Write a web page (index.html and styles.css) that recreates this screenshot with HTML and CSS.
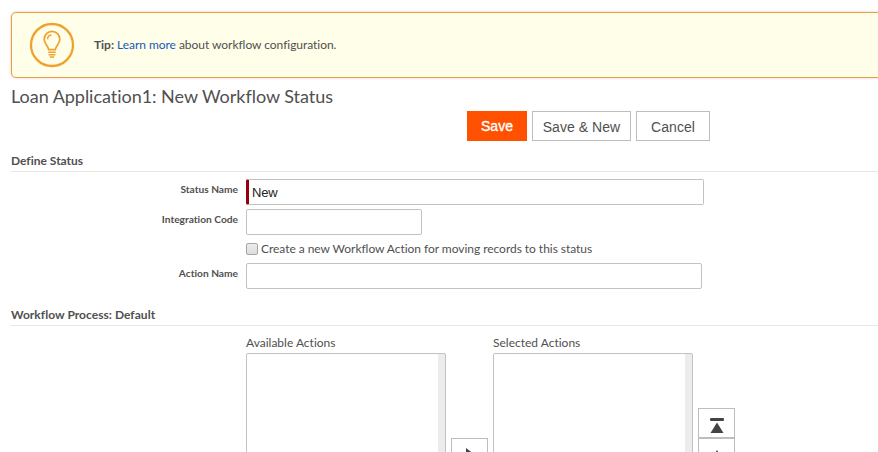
FILE: index.html
```
<!DOCTYPE html>
<html lang="en">
<head>
<meta charset="utf-8">
<title>New Workflow Status</title>
<link rel="stylesheet" href="styles.css">
</head>
<body>
<main class="page">
  <aside class="tip">
    <svg class="bulb" width="46" height="46" viewBox="0 0 46 46" fill="none" stroke="#f0a12b">
      <circle cx="23" cy="23" r="21" stroke-width="2.3"/>
      <path d="M19.7 27.6C19.2 24 15.2 21.6 15.2 17.2a7.8 7.8 0 0 1 15.6 0c0 4.4-4 6.8-4.5 10.4z" stroke-width="1.7"/>
      <path d="M18.6 17.2c0-2.6 1.5-4.2 4-4.3" stroke-width="1.5"/>
      <path d="M19.2 30.2h7.6M19.6 32.7h6.8M20.8 35.1h4.4" stroke-width="1.5"/>
    </svg>
    <p class="tip-text"><b>Tip:</b> <a class="link">Learn more</a> about workflow configuration.</p>
  </aside>
  <h1 class="title"><span>Loan Application1: New Workflow Status</span></h1>
  <div class="actions">
    <button class="btn btn-primary">Save</button>
    <button class="btn btn-new">Save &amp; New</button>
    <button class="btn btn-cancel">Cancel</button>
  </div>
  <h2 class="section"><span class="define">Define Status</span></h2>
  <form class="fields">
    <label class="label" for="status">Status Name</label>
    <input class="input required" id="status" value="New">
    <label class="label" for="code">Integration Code</label>
    <input class="input short" id="code">
    <label class="check"><span class="box"></span><span class="check-text">Create a new Workflow Action for moving records to this status</span></label>
    <label class="label" for="action">Action Name</label>
    <input class="input long" id="action">
  </form>
  <h2 class="section process"><span>Workflow Process: Default</span></h2>
  <div class="picker">
    <div class="list-group">
      <div class="list-label">Available Actions</div>
      <div class="list"></div>
    </div>
    <div class="move">
      <button class="icon-btn" aria-label="Add"><svg width="10" height="14" viewBox="0 0 10 14"><path d="M1 0l9 7-9 7z" fill="#444"/></svg></button>
    </div>
    <div class="list-group">
      <div class="list-label">Selected Actions</div>
      <div class="list"></div>
    </div>
    <div class="order">
      <button class="icon-btn top" aria-label="Move to top"><svg width="14" height="15" viewBox="0 0 14 15"><rect width="14" height="3" rx="1" fill="#444"/><path d="M7 4.5L13.5 15H.5z" fill="#444"/></svg></button>
      <button class="icon-btn up" aria-label="Move up"><svg width="14" height="11" viewBox="0 0 14 11"><path d="M7 0l6.5 11H.5z" fill="#444"/></svg></button>
    </div>
  </div>
</main>
</body>
</html>
```
FILE: styles.css
```
* { box-sizing: border-box; }
html, body { margin: 0; height: 452px; overflow: hidden; background: #fff; }
.page {
  height: 452px;
  overflow: hidden;
  padding: 12px 0 0 11px;
  font: 12px/16px Lato, sans-serif;
  font-variant-ligatures: none;
  color: #505050;
}
.tip {
  height: 66px;
  margin-right: -8px;
  padding-left: 17px;
  display: flex;
  align-items: center;
  border: 1px solid #e3a04e;
  border-radius: 5px;
  background: #fefee9;
  box-shadow: 0 0 3px #f1c9b0;
}
.bulb { margin-right: 19px; flex: none; }
.tip-text { margin: 0; white-space: nowrap; letter-spacing: -.04px; }
.link { color: #2058b8; }
.title {
  margin: 6px 0 0;
  font-size: 18px;
  line-height: 24px;
  font-weight: 400;
  letter-spacing: -.03px;
}
.actions { display: flex; gap: 5px; margin: 3px 0 0 456px; }
.btn {
  height: 30px;
  padding: 1px 0 0;
  border: 1px solid #bdbdbd;
  background: #fff;
  font: 14px "Liberation Sans", sans-serif;
  letter-spacing: .05px;
  color: #505050;
}
.btn-primary { width: 60px; padding: 0; border-color: #ff5100; background: #ff5100; color: #fff; -webkit-text-stroke: .35px #fff; }
.btn-new { width: 99px; }
.btn-cancel { width: 74px; }
.section {
  height: 20px;
  margin: 11px 0 0;
  border-bottom: 1px solid #e6e6e6;
  font-size: 12px;
  line-height: 17px;
  font-weight: 700;
}
.fields {
  display: grid;
  grid-template-columns: 227px 458px;
  grid-template-rows: 26px 26px 20px 26px;
  row-gap: 4px;
  column-gap: 8px;
  margin-top: 7px;
}
.label { text-align: right; font-size: 10.2px; line-height: 20px; font-weight: 700; }
.input {
  width: 100%;
  height: 26px;
  padding: 0 5px;
  border: 1px solid #c2c2c2;
  border-radius: 2px;
  background: #fff;
  font: 13px "Liberation Sans", sans-serif;
  letter-spacing: -.15px;
  color: #222;
  outline: 0;
}
.required { border-left: 3px solid #93000f; padding-left: 3px; }
.short { width: 176px; }
.long { width: 456px; }
.check { grid-column: 2; display: flex; align-items: center; gap: 3px; white-space: nowrap; letter-spacing: -.04px; }
.box { width: 12px; height: 12px; border: 1px solid #a6a6a6; border-radius: 2px; background: linear-gradient(#ececec, #dcdcdc); }
.process { margin-top: 17px; }
.process span { letter-spacing: .04px; }
.picker { display: flex; margin: 9px 0 0 235px; }
.list-group { width: 200px; }
.list-label { height: 18px; line-height: 16px; }
.list {
  height: 140px;
  border: 1px solid #c2c2c2;
  border-radius: 2px;
  background: linear-gradient(#ececec, #ececec) right / 7px 100% no-repeat #fff;
}
.move { margin: 103px 5px 0; }
.icon-btn {
  display: flex;
  justify-content: center;
  width: 37px;
  height: 30px;
  padding: 9px 0 0;
  border: 1px solid #bdbdbd;
  background: #fff;
}
.order { margin: 73px 0 0 5px; }
.up { padding-top: 11px; }
```
